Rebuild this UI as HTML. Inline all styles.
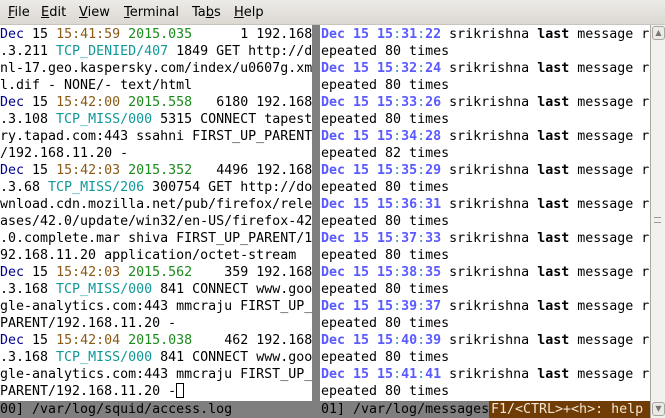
<!DOCTYPE html>
<html><head><meta charset="utf-8"><style>
*{margin:0;padding:0;box-sizing:border-box}
body{width:665px;height:418px;overflow:hidden;background:#fff;position:relative;font-family:"DejaVu Sans Mono","Liberation Mono",monospace}
#menu{position:absolute;left:0;top:0;width:665px;height:25px;background:linear-gradient(#edebe8,#dcd8d2);border-bottom:1px solid #c8c4bd;font-family:"DejaVu Sans","Liberation Sans",sans-serif;font-size:13px;color:#000}
#menu span{position:absolute;top:5px}
#menu u{text-decoration:underline}
.pane{position:absolute;top:26px;overflow:hidden;font-size:13.3px;line-height:17px;white-space:pre;color:#000}
#l{left:0;width:312px;height:375px}
#r{left:321px;width:328px;height:375px}
#sep{position:absolute;left:312px;top:25px;width:8px;height:376px;background:#7f7f7f}
.b{color:#00008b}.t{color:#8b5a14}.g{color:#1a8a1a}.c{color:#129898}
.rb{color:#5a5aff;font-weight:bold}.rc{color:#3a9aa8}
.k{font-weight:bold}
#status{position:absolute;left:0;top:401px;width:650px;height:17px;background:#7f7f7f;font-size:13.3px;line-height:17px;white-space:pre;color:#000}
#status span{position:absolute;top:0}
#help{position:absolute;left:489px;top:0;width:161px;height:17px;background:#703c06;color:#f4e4d0;padding-left:2px}
#sb{position:absolute;left:650px;top:25px;width:15px;height:393px;background:#f2f1ef;border-left:1px solid #a9a6a0}
.ar{position:absolute;left:1px;width:13px;height:14px;border:1px solid #a9a6a0;border-radius:3px;background:#eceae6;font-size:8px;line-height:12px;text-align:center;color:#777;font-family:"DejaVu Sans",sans-serif}
#cur{display:inline-block;width:8px;height:15px;border:1px solid #000;vertical-align:-3px}
</style></head><body>
<div id="menu"><span style="left:8px"><u>F</u>ile</span><span style="left:41px"><u>E</u>dit</span><span style="left:79px"><u>V</u>iew</span><span style="left:124px"><u>T</u>erminal</span><span style="left:192px">Ta<u>b</u>s</span><span style="left:234px"><u>H</u>elp</span></div>
<div class="pane" id="l"><span class="b">Dec</span> 15 <span class="t">15:41:59</span> <span class="g">2015.035</span>      1 192.168
.3.211 <span class="c">TCP_DENIED/407</span> 1849 GET http://d
nl-17.geo.kaspersky.com/index/u0607g.xm
l.dif - NONE/- text/html
<span class="b">Dec</span> 15 <span class="t">15:42:00</span> <span class="g">2015.558</span>   6180 192.168
.3.108 <span class="c">TCP_MISS/000</span> 5315 CONNECT tapest
ry.tapad.com:443 ssahni FIRST_UP_PARENT
/192.168.11.20 -
<span class="b">Dec</span> 15 <span class="t">15:42:03</span> <span class="g">2015.352</span>   4496 192.168
.3.68 <span class="c">TCP_MISS/206</span> 300754 GET http://do
wnload.cdn.mozilla.net/pub/firefox/rele
ases/42.0/update/win32/en-US/firefox-42
.0.complete.mar shiva FIRST_UP_PARENT/1
92.168.11.20 application/octet-stream
<span class="b">Dec</span> 15 <span class="t">15:42:03</span> <span class="g">2015.562</span>    359 192.168
.3.168 <span class="c">TCP_MISS/000</span> 841 CONNECT www.goo
gle-analytics.com:443 mmcraju FIRST_UP_
PARENT/192.168.11.20 -
<span class="b">Dec</span> 15 <span class="t">15:42:04</span> <span class="g">2015.038</span>    462 192.168
.3.168 <span class="c">TCP_MISS/000</span> 841 CONNECT www.goo
gle-analytics.com:443 mmcraju FIRST_UP_
PARENT/192.168.11.20 -<span id="cur"></span></div>
<div id="sep"></div>
<div class="pane" id="r"><span class="rb">Dec 15 15</span><span class="rc">:</span><span class="rb">31</span><span class="rc">:</span><span class="rb">22</span> srikrishna <span class="k">last</span> message r
epeated 80 times
<span class="rb">Dec 15 15</span><span class="rc">:</span><span class="rb">32</span><span class="rc">:</span><span class="rb">24</span> srikrishna <span class="k">last</span> message r
epeated 80 times
<span class="rb">Dec 15 15</span><span class="rc">:</span><span class="rb">33</span><span class="rc">:</span><span class="rb">26</span> srikrishna <span class="k">last</span> message r
epeated 80 times
<span class="rb">Dec 15 15</span><span class="rc">:</span><span class="rb">34</span><span class="rc">:</span><span class="rb">28</span> srikrishna <span class="k">last</span> message r
epeated 82 times
<span class="rb">Dec 15 15</span><span class="rc">:</span><span class="rb">35</span><span class="rc">:</span><span class="rb">29</span> srikrishna <span class="k">last</span> message r
epeated 80 times
<span class="rb">Dec 15 15</span><span class="rc">:</span><span class="rb">36</span><span class="rc">:</span><span class="rb">31</span> srikrishna <span class="k">last</span> message r
epeated 80 times
<span class="rb">Dec 15 15</span><span class="rc">:</span><span class="rb">37</span><span class="rc">:</span><span class="rb">33</span> srikrishna <span class="k">last</span> message r
epeated 80 times
<span class="rb">Dec 15 15</span><span class="rc">:</span><span class="rb">38</span><span class="rc">:</span><span class="rb">35</span> srikrishna <span class="k">last</span> message r
epeated 80 times
<span class="rb">Dec 15 15</span><span class="rc">:</span><span class="rb">39</span><span class="rc">:</span><span class="rb">37</span> srikrishna <span class="k">last</span> message r
epeated 80 times
<span class="rb">Dec 15 15</span><span class="rc">:</span><span class="rb">40</span><span class="rc">:</span><span class="rb">39</span> srikrishna <span class="k">last</span> message r
epeated 80 times
<span class="rb">Dec 15 15</span><span class="rc">:</span><span class="rb">41</span><span class="rc">:</span><span class="rb">41</span> srikrishna <span class="k">last</span> message r
epeated 80 times</div>
<div id="status"><span style="left:0">00] /var/log/squid/access.log</span><span style="left:321px">01] /var/log/messages</span><div id="help">F1/&lt;CTRL&gt;+&lt;h&gt;: help</div></div>
<div id="sb"><div class="ar" style="top:1px">&#9650;</div><div style="position:absolute;left:3px;top:192px;width:7px;height:6px;border-top:1px solid #999;border-bottom:1px solid #999"></div><div class="ar" style="top:377px">&#9660;</div></div>
</body></html>
